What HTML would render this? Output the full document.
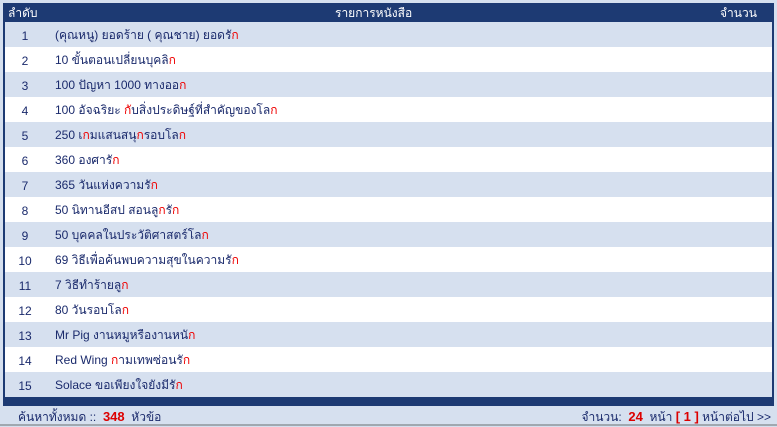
<!DOCTYPE html>
<html><head><meta charset="utf-8"><style>
*{margin:0;padding:0;box-sizing:border-box}
body{width:777px;height:426px;background:#d6e0ef;font-family:"Liberation Sans",Tahoma,sans-serif;font-size:12px;color:#1a2a6c;position:relative;overflow:hidden}
.box{position:absolute;left:3px;top:3px;width:771px;height:403px;background:#1d3a73;padding:0 2px}
.hd{height:19px;color:#fff;position:relative;font-size:12px}
.hd span{position:absolute;top:1px}
.row{height:25px;position:relative;background:#fff}
.row:nth-child(odd){background:#d6e0ef}
.row>span{position:absolute;top:4px}
.row>span.n{top:7px}
.n{left:0;width:40px;text-align:center}
.t{left:50px}
.r{color:#e00}
.foot{position:absolute;top:408px;font-size:12px;color:#1a2a6c}
.b{color:#d00;font-weight:bold;font-size:13px}
.line{position:absolute;left:0;top:424px;width:777px;height:2px;background:#a0a8b0}
</style></head><body>
<div class="box">
<div class="hd"><span style="left:3px">ลำดับ</span><span style="left:330px">รายการหนังสือ</span><span style="left:715px">จำนวน</span></div>
<div>
<div class="row"><span class="n">1</span><span class="t">(คุณหนู) ยอดร้าย ( คุณชาย) ยอดรั<span class="r">ก</span></span></div>
<div class="row"><span class="n">2</span><span class="t">10 ขั้นตอนเปลี่ยนบุคลิ<span class="r">ก</span></span></div>
<div class="row"><span class="n">3</span><span class="t">100 ปัญหา 1000 ทางออ<span class="r">ก</span></span></div>
<div class="row"><span class="n">4</span><span class="t">100 อัจฉริยะ <span class="r">ก</span>ับสิ่งประดิษฐ์ที่สำคัญของโล<span class="r">ก</span></span></div>
<div class="row"><span class="n">5</span><span class="t">250 เ<span class="r">ก</span>มแสนสนุ<span class="r">ก</span>รอบโล<span class="r">ก</span></span></div>
<div class="row"><span class="n">6</span><span class="t">360 องศารั<span class="r">ก</span></span></div>
<div class="row"><span class="n">7</span><span class="t">365 วันแห่งความรั<span class="r">ก</span></span></div>
<div class="row"><span class="n">8</span><span class="t">50 นิทานอีสป สอนลู<span class="r">ก</span>รั<span class="r">ก</span></span></div>
<div class="row"><span class="n">9</span><span class="t">50 บุคคลในประวัติศาสตร์โล<span class="r">ก</span></span></div>
<div class="row"><span class="n">10</span><span class="t">69 วิธีเพื่อค้นพบความสุขในความรั<span class="r">ก</span></span></div>
<div class="row"><span class="n">11</span><span class="t">7 วิธีทำร้ายลู<span class="r">ก</span></span></div>
<div class="row"><span class="n">12</span><span class="t">80 วันรอบโล<span class="r">ก</span></span></div>
<div class="row"><span class="n">13</span><span class="t">Mr Pig งานหมูหรืองานหนั<span class="r">ก</span></span></div>
<div class="row"><span class="n">14</span><span class="t">Red Wing <span class="r">ก</span>ามเทพซ่อนรั<span class="r">ก</span></span></div>
<div class="row"><span class="n">15</span><span class="t">Solace ขอเพียงใจยังมีรั<span class="r">ก</span></span></div>
</div>
</div>
<div class="foot" style="left:18px">ค้นหาทั้งหมด :: &nbsp;<span class="b">348</span>&nbsp; หัวข้อ</div>
<div class="foot" style="right:6px">จำนวน: &nbsp;<span class="b">24</span>&nbsp; หน้า <span class="b">[ 1 ]</span> หน้าต่อไป &gt;&gt;</div>
<div class="line"></div>
</body></html>
